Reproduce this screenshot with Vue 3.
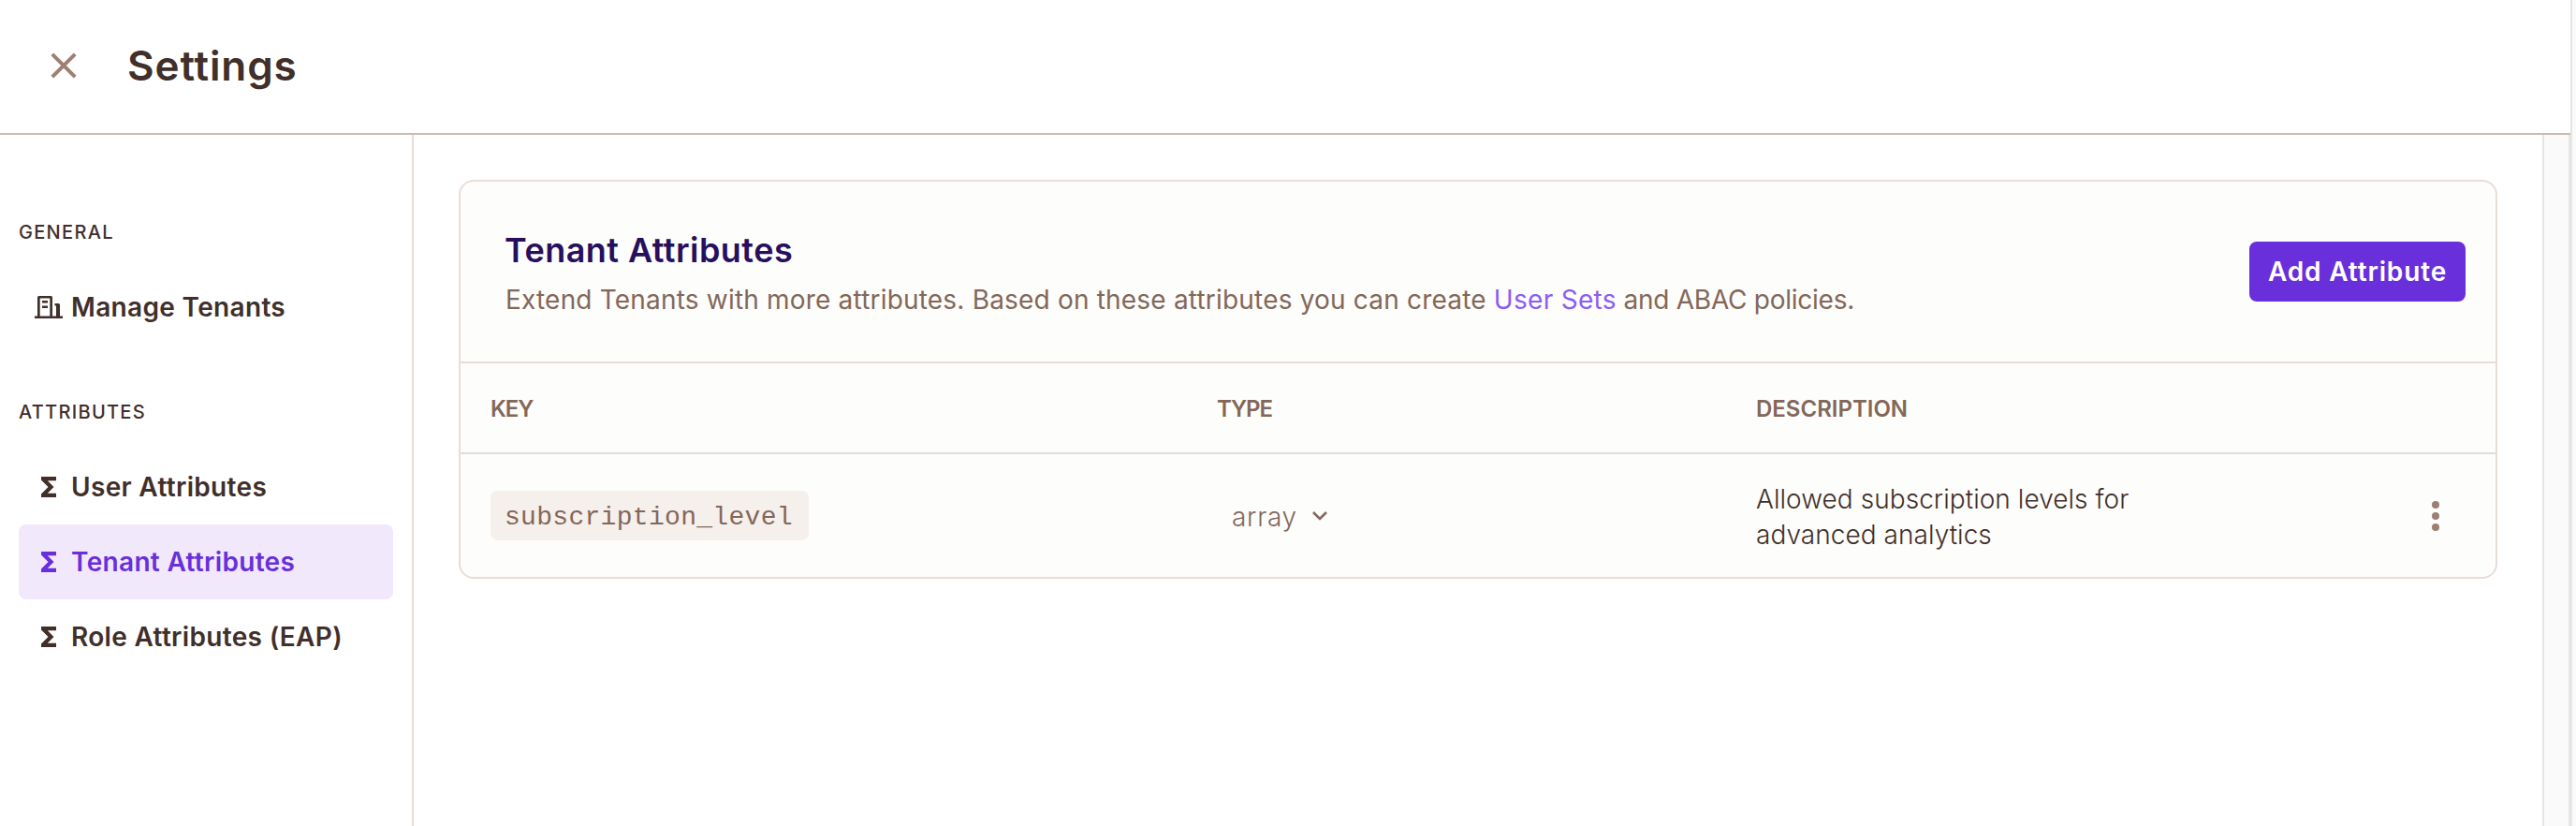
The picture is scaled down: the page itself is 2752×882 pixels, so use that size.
<script setup>
import { ref } from 'vue'

const active = ref('Tenant Attributes')
const groups = [
  { label: 'General', items: [{ name: 'Manage Tenants', icon: 'building' }] },
  {
    label: 'Attributes',
    items: [
      { name: 'User Attributes', icon: 'sigma' },
      { name: 'Tenant Attributes', icon: 'sigma' },
      { name: 'Role Attributes (EAP)', icon: 'sigma' },
    ],
  },
]
const rows = [
  { key: 'subscription_level', type: 'array', description: 'Allowed subscription levels for advanced analytics' },
]
</script>

<template>
  <div class="window">
    <div class="main">
      <header class="header">
        <button class="close" aria-label="Close">
          <svg width="28" height="28" viewBox="0 0 28 28"><path d="M1.8 1.8 26.2 26.2M26.2 1.8 1.8 26.2" /></svg>
        </button>
        <h1>Settings</h1>
      </header>
      <div class="body">
        <nav class="sidebar">
          <section v-for="g in groups" :key="g.label" class="group">
            <h2>{{ g.label }}</h2>
            <a v-for="i in g.items" :key="i.name" class="item" :class="{ active: i.name === active }" @click="active = i.name">
              <svg v-if="i.icon === 'building'" class="icon" width="32" height="32" viewBox="0 0 32 32">
                <path fill-rule="evenodd" d="M1 25.500h3V5.500q0-1.500 1.500-1.500h13q1.500 0 1.500 1.500v20h4v-11h-1.500v-2.500h4q1.500 0 1.500 1.500v12h3V28H1zM6.700 25.500h10.600V6.500H6.700zM9 9h6v2.500H9zM9 14.500h6V17H9z" />
              </svg>
              <svg v-else class="icon" width="32" height="32" viewBox="0 0 32 32">
                <path d="M8 5H24V9.200H14.800L21.500 16 14.800 22.800H24V27H8V23.500L15.500 16 8 8.500Z" />
              </svg>
              <span>{{ i.name }}</span>
            </a>
          </section>
        </nav>
        <main class="content">
          <section class="card">
            <div class="card-head">
              <div class="intro">
                <h3>Tenant Attributes</h3>
                <p>Extend Tenants with more attributes. Based on these attributes you can create <a>User Sets</a><span> and ABAC policies.</span></p>
              </div>
              <button class="add">Add Attribute</button>
            </div>
            <div class="row labels">
              <span>Key</span><span>Type</span><span class="wide">Description</span><span></span>
            </div>
            <div v-for="r in rows" :key="r.key" class="row entry">
              <div><code>{{ r.key }}</code></div>
              <div class="type">
                <span>{{ r.type }}</span>
                <svg width="18" height="12" viewBox="0 0 18 12"><path d="M2 2 9 9 16 2" /></svg>
              </div>
              <div class="desc">{{ r.description }}</div>
              <div class="more">
                <svg width="8" height="32" viewBox="0 0 8 32"><circle cx="4" cy="4" r="4" /><circle cx="4" cy="16" r="4" /><circle cx="4" cy="28" r="4" /></svg>
              </div>
            </div>
          </section>
        </main>
        <div class="scroll"></div>
      </div>
    </div>
    <div class="edge"></div>
  </div>
</template>

<style>
body { margin: 0; background: #fff; }
</style>

<style scoped>
* { box-sizing: border-box; }
h1, h2, h3, p { margin: 0; }
button { border: 0; padding: 0; font: inherit; }
svg { display: block; flex: none; }
.window { display: flex; width: 2752px; height: 882px; overflow: hidden; background: #fff; color: #412f2a; font-family: Inter, "Liberation Sans", sans-serif; font-size: 28px; white-space: nowrap; }
.main { display: flex; flex-direction: column; width: 2746px; }
.edge { flex: 1; border-left: 2px solid #e5e5e5; background: #fafafa; }
.header { display: flex; align-items: center; height: 144px; padding: 0 0 2px 54px; border-bottom: 2px solid #cdbab2; }
.close { width: 28px; background: none; margin-right: 54px; }
.close path { fill: none; stroke: #9d7f73; stroke-width: 4; }
h1 { padding-bottom: 1px; font-size: 44px; line-height: 56px; font-weight: 600; letter-spacing: 0.9px; }
.body { display: flex; flex: 1; }
.sidebar { width: 442px; padding: 71px 20px 0; border-right: 2px solid #e9ddd7; }
.group { margin-bottom: 39px; }
h2 { height: 64px; padding-top: 1px; margin-bottom: 9px; line-height: 64px; font-size: 20px; font-weight: 500; letter-spacing: 1.3px; text-transform: uppercase; }
.item { display: flex; align-items: center; height: 80px; padding-left: 16px; border-radius: 8px; font-weight: 600; letter-spacing: 0.33px; cursor: pointer; }
.item span { margin-left: 8px; }
.icon { fill: currentColor; }
.item.active { color: #682fdb; background: #f1e8fb; }
.content { flex: 1; padding: 48px 48px 0; }
.card { height: 426px; border: 2px solid #e9ddd7; border-radius: 16px; background: #fdfdfb; }
.card-head { display: flex; justify-content: space-between; align-items: center; height: 194px; padding: 0 32px 0 47px; border-bottom: 2px solid #e9ddd7; }
.intro { padding-top: 4px; color: #836759; }
h3 { font-size: 36px; line-height: 56px; font-weight: 600; letter-spacing: 0.46px; color: #280f5e; }
.intro p { padding-left: 1px; line-height: 50px; font-weight: 370; letter-spacing: 0.19px; }
.intro a { color: #8c5cf5; letter-spacing: 0.3px; }
.intro p span { letter-spacing: -0.25px; }
.add { width: 231px; height: 64px; border-radius: 8px; background: #682fdb; color: #fff; font-weight: 600; letter-spacing: 0.85px; }
.row { display: grid; grid-template-columns: 776px 576px 640px 1fr; align-items: center; padding-left: 32px; }
.labels { height: 97px; padding-top: 2px; border-bottom: 2px solid #dedede; color: #836759; font-size: 24px; font-weight: 600; letter-spacing: -1.1px; text-transform: uppercase; }
.labels .wide { letter-spacing: 0; }
.entry { height: 131px; }
code { display: block; width: 340px; height: 53px; padding: 2px 0 0 15px; border-radius: 8px; background: #f6f0ed; color: #836759; font: 28px/53px "Liberation Mono", monospace; letter-spacing: 0.3px; }
.type { display: flex; align-items: center; padding-left: 16px; color: #836759; font-weight: 360; letter-spacing: 0.7px; }
.type span { padding-top: 2px; }
.type svg { margin-left: 15px; }
.type path { fill: none; stroke: #836759; stroke-width: 2.6; }
.desc { width: 420px; padding-top: 3px; line-height: 38px; font-weight: 350; letter-spacing: 0.05px; white-space: normal; }
.more svg { margin-left: 82px; fill: #9d7f73; }
.scroll { width: 30px; border: solid #e5e5e5; border-width: 0 2px; background: #fafafa; }
</style>
